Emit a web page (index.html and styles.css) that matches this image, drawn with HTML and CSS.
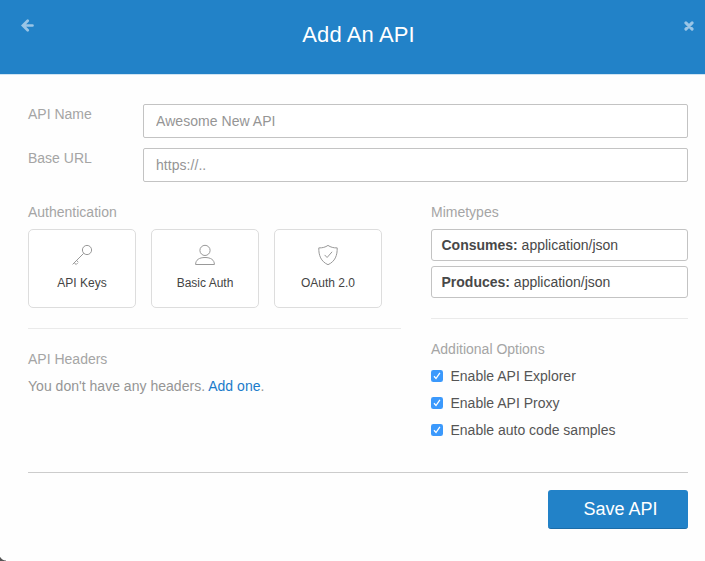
FILE: index.html
```html
<!DOCTYPE html>
<html lang="en">
<head>
<meta charset="utf-8">
<title>Add An API</title>
<link rel="stylesheet" href="styles.css">
</head>
<body>
<main class="modal">
  <header class="header">
    <svg class="back" width="13" height="13" viewBox="0 0 13 13"><path d="M6.7 1.700 1.900 6.500l4.800 4.800M2.300 6.500h9.200" fill="none" stroke="currentColor" stroke-width="2.700" stroke-linecap="round"/></svg>
    <h1 class="title">Add An API</h1>
    <svg class="close" width="10" height="10" viewBox="0 0 10 10"><path d="M1.9 1.9l6.2 6.2M8.1 1.9 1.9 8.1" stroke="currentColor" stroke-width="3" stroke-linecap="round"/></svg>
  </header>
  <form class="form">
    <div class="field"><label class="label" for="name">API Name</label><input class="input" id="name" type="text" placeholder="Awesome New API"></div>
    <div class="field"><label class="label" for="url">Base URL</label><input class="input" id="url" type="text" placeholder="https://.."></div>
    <div class="columns">
      <section class="left">
        <h2 class="heading">Authentication</h2>
        <div class="cards">
          <div class="card">
            <svg class="icon" width="22" height="22" viewBox="0 0 22 22"><circle cx="16" cy="6" r="4.6"/><path d="M12.7 9.3 1.6 20.4M3.2 18.8l2 1.7 1.5-1.6M5.5 16.5l1.8 1.6"/></svg>
            <span class="name">API Keys</span>
          </div>
          <div class="card">
            <svg class="icon" width="22" height="22" viewBox="0 0 22 22"><circle cx="11" cy="6.4" r="5.1"/><path d="M1.600 20.500c0-4.600 3.600-7 9.400-7s9.400 2.400 9.400 7z"/></svg>
            <span class="name">Basic Auth</span>
          </div>
          <div class="card">
            <svg class="icon" width="22" height="22" viewBox="0 0 22 22"><path d="M11 1.4c2.6 1.8 5.6 2.6 9.2 2.5.2 7.4-2.1 13.6-9.2 16.8C3.9 17.5 1.6 11.3 1.8 3.9 5.4 4 8.4 3.2 11 1.4z"/><path d="m7.6 10.9 2.5 2.6 5-5.7"/></svg>
            <span class="name">OAuth 2.0</span>
          </div>
        </div>
        <hr class="rule">
        <h2 class="heading">API Headers</h2>
        <p class="empty">You don't have any headers. <a class="link" href="#">Add one</a>.</p>
      </section>
      <section class="right">
        <h2 class="heading">Mimetypes</h2>
        <div class="mime"><b>Consumes:</b> application/json</div>
        <div class="mime"><b>Produces:</b> application/json</div>
        <hr class="rule">
        <h2 class="heading options">Additional Options</h2>
        <div class="option"><svg class="check" width="12" height="12" viewBox="0 0 12 12"><rect width="12" height="12" rx="2.3"/><path d="m3 6.3 2 2.2 3.9-5.7"/></svg>Enable API Explorer</div>
        <div class="option"><svg class="check" width="12" height="12" viewBox="0 0 12 12"><rect width="12" height="12" rx="2.3"/><path d="m3 6.3 2 2.2 3.9-5.7"/></svg>Enable API Proxy</div>
        <div class="option"><svg class="check" width="12" height="12" viewBox="0 0 12 12"><rect width="12" height="12" rx="2.3"/><path d="m3 6.3 2 2.2 3.9-5.7"/></svg>Enable auto code samples</div>
      </section>
    </div>
    <footer class="footer"><button class="save" type="button">Save API</button></footer>
  </form>
  <span class="corner"></span>
</main>
</body>
</html>
```

FILE: styles.css
```css
* { box-sizing: border-box; }
body {
  margin: 0;
  background: #fefefe;
  color: #555;
  font: 14px/20px "Liberation Sans", Arial, sans-serif;
}
.modal { position: relative; height: 561px; overflow: hidden; }
.header {
  display: flex;
  justify-content: space-between;
  height: 75px;
  padding: 20px 11px 0 21px;
  background: #2282c8;
  background-clip: padding-box;
  border-bottom: 1px solid #cfe4f3;
  color: #9ac5e6;
}
.back { margin-top: -1px; }
.close { margin-top: 1px; }
.title {
  margin: 0 1px 0 0;
  color: #fff;
  font-size: 22px;
  font-weight: 400;
  line-height: 30px;
  letter-spacing: .1px;
}
.form { padding: 29px 17px 0 28px; }
.field { display: flex; margin-bottom: 10px; }
.label { width: 115px; color: #a5a5a5; }
.input {
  flex: 1;
  height: 34px;
  padding: 0 12px;
  border: 1px solid #c3c3c3;
  border-radius: 2px;
  background: #fff;
  font: inherit;
  letter-spacing: .05px;
}
.input::placeholder { color: #959595; opacity: 1; }
.columns { display: flex; justify-content: space-between; height: 280px; padding-top: 10px; }
.left { width: 373px; }
.right { width: 257px; }
.heading { margin: 0 0 7px; color: #a5a5a5; font-size: 14px; font-weight: 400; line-height: 20px; }
.cards { display: flex; gap: 15px; }
.card {
  display: flex;
  flex-direction: column;
  align-items: center;
  width: 108px;
  height: 79px;
  padding-top: 14px;
  border: 1px solid #ddd;
  border-radius: 5px;
  background: #fff;
}
.icon { fill: none; stroke: #999; stroke-width: 1; }
.name { margin-top: 7px; color: #444; font-size: 12px; line-height: 20px; }
.rule { height: 1px; margin: 20px 0; border: 0; background: #eaeaea; }
.empty { margin: 0; color: #959595; letter-spacing: .02px; }
.link { color: #1b7bca; text-decoration: none; }
.mime {
  height: 32px;
  margin-bottom: 5px;
  padding-left: 9.5px;
  border: 1px solid #c3c3c3;
  border-radius: 3px;
  background: #fff;
  color: #484848;
  line-height: 30px;
}
.options { margin-bottom: 7px; }
.option { display: flex; align-items: center; gap: 7.5px; height: 20px; margin-bottom: 7px; }
.check { fill: #3b99fc; }
.check path { fill: none; stroke: #fff; stroke-width: 1.3; }
.footer { display: flex; justify-content: flex-end; padding-top: 17px; border-top: 1px solid #ccc; }
.save {
  width: 140px;
  height: 39px;
  padding: 0 0 0 5px;
  border: 0;
  border-bottom: 1px solid #1b6ca8;
  border-radius: 3px;
  background: #2282c8;
  color: #fff;
  font: 18px "Liberation Sans", Arial, sans-serif;
}
.corner {
  position: absolute;
  left: 0;
  bottom: 0;
  width: 6px;
  height: 4px;
  background: radial-gradient(circle at 6px -3px, transparent 6px, #555 7px);
}
```
